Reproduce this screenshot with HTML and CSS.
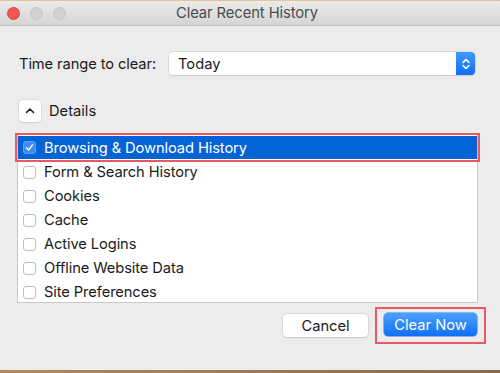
FILE: index.html
```html
<!DOCTYPE html>
<html>
<head>
<meta charset="utf-8">
<link rel="stylesheet" href="styles.css">
</head>
<body>
<div class="window">
  <div class="titlebar">
    <div class="lights">
      <span class="light red"></span>
      <span class="light gray"></span>
      <span class="light gray"></span>
    </div>
    <div class="title">Clear Recent History</div>
  </div>
  <div class="content">
    <div class="range-row">
      <span class="label">Time range to clear:</span>
      <div class="select">
        <span class="select-value">Today</span>
        <span class="stepper">
          <svg width="10" height="14" viewBox="0 0 10 14"><path d="M2 5.5 L5 2.5 L8 5.5 M2 8.5 L5 11.5 L8 8.5" fill="none" stroke="#fff" stroke-width="1.6" stroke-linecap="round" stroke-linejoin="round"/></svg>
        </span>
      </div>
    </div>
    <div class="details-row">
      <span class="disclosure">
        <svg width="10" height="8" viewBox="0 0 10 8"><path d="M1.5 5.5 L5 2 L8.5 5.5" fill="none" stroke="#222" stroke-width="1.6" stroke-linecap="round" stroke-linejoin="round"/></svg>
      </span>
      <span class="details-label">Details</span>
    </div>
    <div class="list">
      <div class="item selected">
        <span class="cb checked">
          <svg width="9" height="9" viewBox="0 0 9 9"><path d="M1.5 4.8 L3.6 7 L7.5 1.8" fill="none" stroke="#fff" stroke-width="1.4" stroke-linecap="round" stroke-linejoin="round"/></svg>
        </span>
        <span>Browsing &amp; Download History</span>
      </div>
      <div class="item"><span class="cb"></span><span>Form &amp; Search History</span></div>
      <div class="item"><span class="cb"></span><span>Cookies</span></div>
      <div class="item"><span class="cb"></span><span>Cache</span></div>
      <div class="item"><span class="cb"></span><span>Active Logins</span></div>
      <div class="item"><span class="cb"></span><span>Offline Website Data</span></div>
      <div class="item"><span class="cb"></span><span>Site Preferences</span></div>
    </div>
    <div class="buttons">
      <button class="btn cancel">Cancel</button>
      <span class="highlight"><button class="btn primary">Clear Now</button></span>
    </div>
  </div>
  <div class="desktop"></div>
</div>
</body>
</html>
```
FILE: styles.css
```css
* { box-sizing: border-box; }
html, body { margin: 0; padding: 0; }
body {
  width: 500px;
  height: 373px;
  overflow: hidden;
  background: #ececec;
  font-family: Inter, "Noto Sans", "Liberation Sans", sans-serif;
  color: #1a1a1a;
}
.window {
  width: 500px;
  height: 373px;
  display: flex;
  flex-direction: column;
  border-top: 1px solid #e9c29c;
}
.titlebar {
  height: 25px;
  flex: none;
  display: flex;
  align-items: center;
  background: linear-gradient(#ebebeb, #d5d5d5);
  border-bottom: 1px solid #bdbdbd;
  padding-left: 7px;
}
.lights { display: flex; gap: 10px; width: 160px; }
.light { width: 13px; height: 13px; border-radius: 50%; display: block; }
.light.red { background: #f1564e; border: 1px solid #de4640; }
.light.gray { background: #d2d2d2; border: 1px solid #c6c6c6; }
.title {
  font-size: 14.8px;
  color: #4b4b4b;
  letter-spacing: -0.1px;
  margin-left: 9px;
}
.content {
  flex: 1;
  display: flex;
  flex-direction: column;
  padding: 26px 14px 0 17px;
}
.range-row {
  display: flex;
  align-items: center;
  padding-left: 2px;
}
.label { font-size: 14.7px; width: 150px; letter-spacing: -0.1px; }
.select {
  width: 306px;
  height: 23px;
  background: #fff;
  border-radius: 4px;
  box-shadow: 0 0 0 0.5px #c8c8c8, 0 1px 1px rgba(0,0,0,0.12);
  display: flex;
  align-items: center;
  justify-content: space-between;
}
.select-value { font-size: 14.7px; padding-left: 9px; }
.stepper {
  width: 19px;
  height: 23px;
  background: linear-gradient(#3f9bfb, #106ef5);
  border-radius: 0 4px 4px 0;
  display: flex;
  align-items: center;
  justify-content: center;
}
.details-row {
  display: flex;
  align-items: center;
  margin-top: 25px;
  padding-left: 2px;
}
.disclosure {
  width: 22px;
  height: 22px;
  background: #fff;
  border-radius: 4px;
  box-shadow: 0 0 0 0.5px #cdcdcd, 0 1px 1px rgba(0,0,0,0.12);
  display: flex;
  align-items: center;
  justify-content: center;
}
.details-label { font-size: 14.7px; margin-left: 8px; }
.list {
  margin-top: 12px;
  width: 461px;
  height: 169px;
  background: #fff;
  border: 1px solid #c9c9c9;
  padding-top: 1px;
}
.item {
  height: 24px;
  display: flex;
  align-items: center;
  font-size: 14.7px;
  padding-left: 5px;
  letter-spacing: -0.1px;
}
.item.selected {
  background: #0464d6;
  color: #fff;
  height: 23px;
  margin-bottom: 1px;
  outline: 2px solid #ea5862;
  outline-offset: 1px;
}
.cb {
  width: 13px;
  height: 13px;
  border: 1px solid #bfbfbf;
  border-radius: 3px;
  background: #fff;
  margin-right: 8px;
  flex: none;
  display: flex;
  align-items: center;
  justify-content: center;
}
.cb.checked {
  background: #3b8ef5;
  border-color: #5aa0f7;
}
.buttons {
  display: flex;
  justify-content: flex-end;
  align-items: center;
  margin-top: 4px;
  gap: 7px;
}
.btn {
  font-family: inherit;
  font-size: 14.7px;
  height: 23px;
  border-radius: 4px;
  border: none;
  padding: 0;
}
.cancel {
  width: 85px;
  background: #fff;
  color: #1a1a1a;
  box-shadow: 0 0 0 0.5px #c8c8c8, 0 1px 1px rgba(0,0,0,0.15);
}
.highlight {
  display: flex;
  border: 2px solid #ea5862;
  padding: 4px 7px 6px 7px;
}
.primary {
  width: 93px;
  color: #fff;
  background: linear-gradient(#4aa2fb, #0f6ff5);
  box-shadow: 0 0 0 0.5px #2a7ae8;
}
.desktop {
  margin-top: auto;
  height: 3px;
  flex: none;
  background: linear-gradient(90deg, #b28a5e, #8a6a4a);
}
```
